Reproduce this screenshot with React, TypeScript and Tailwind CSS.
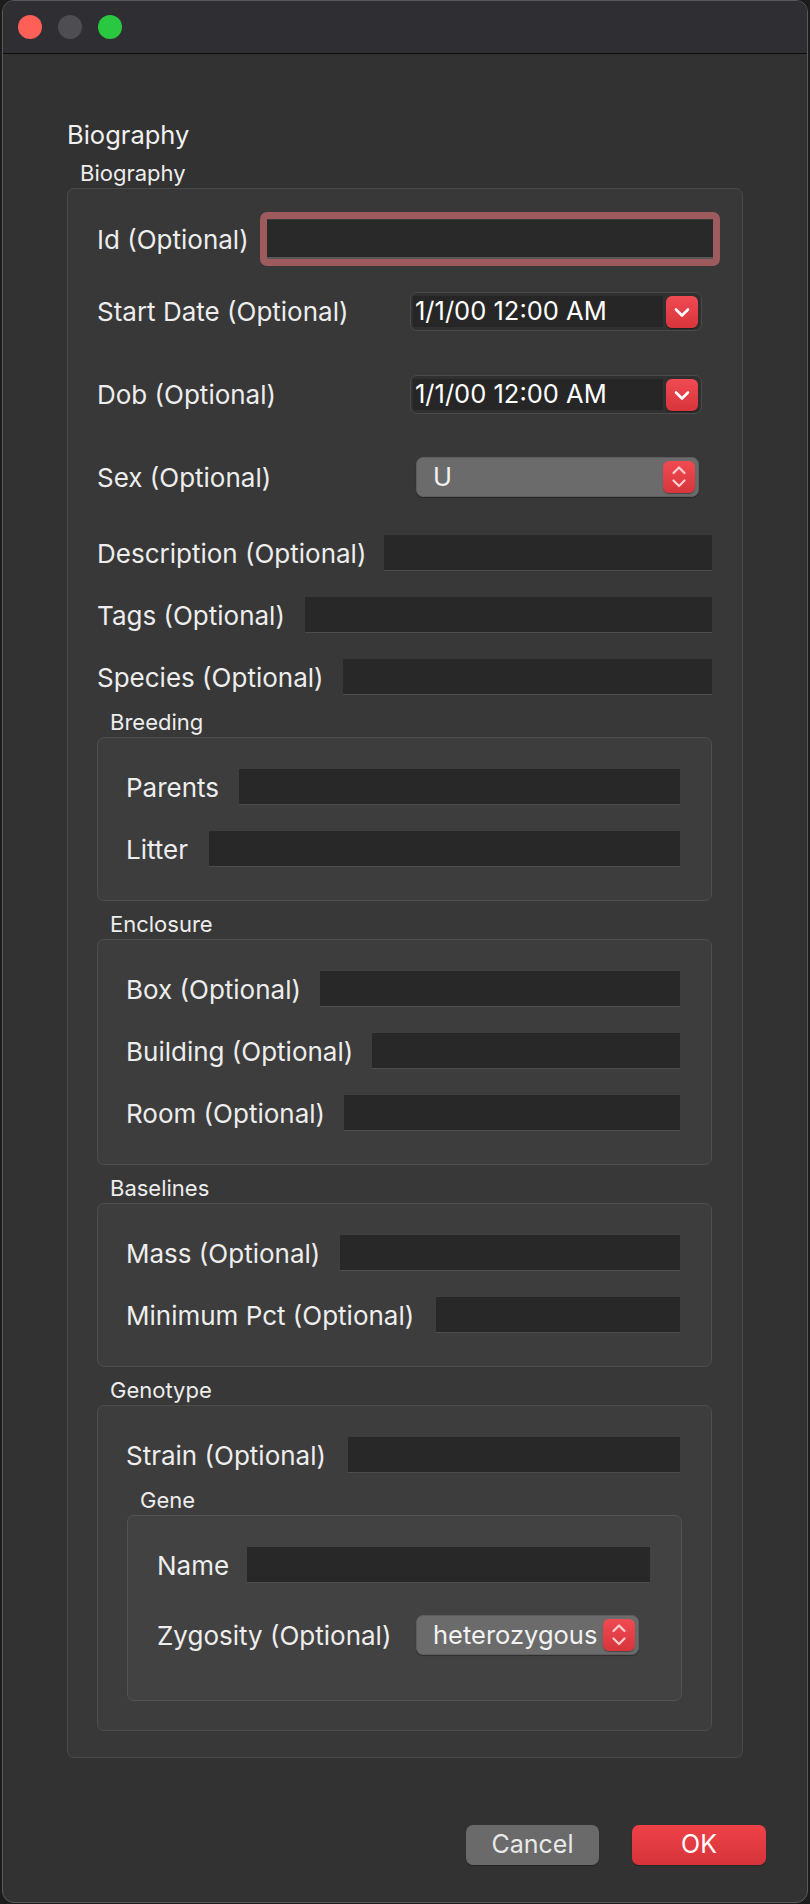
import type { ReactNode } from 'react'

const FONT = "font-['Inter','Liberation_Sans',sans-serif]"

function ChevronDown() {
  return (
    <svg viewBox="0 0 32 32" className="size-full">
      <path d="M10 13.5 L16 19.5 L22 13.5" fill="none" stroke="#ffffff" strokeWidth="2.6" strokeLinecap="round" strokeLinejoin="round" />
    </svg>
  )
}

function ChevronUpDown() {
  return (
    <svg viewBox="0 0 32 32" className="size-full">
      <path d="M10.5 12 L16 6.5 L21.5 12" fill="none" stroke="#f8cfd1" strokeWidth="2.2" strokeLinecap="round" strokeLinejoin="round" />
      <path d="M10.5 19.5 L16 25 L21.5 19.5" fill="none" stroke="#f8cfd1" strokeWidth="2.2" strokeLinecap="round" strokeLinejoin="round" />
    </svg>
  )
}

function Stepper({ children }: { children: ReactNode }) {
  return (
    <div className="h-[32px] w-[32px] shrink-0 rounded-[6px] bg-gradient-to-b from-[#f04a52] to-[#d8343b] shadow-[0_1px_1px_rgba(0,0,0,0.35)]">
      {children}
    </div>
  )
}

function TextRow({ label, labelW }: { label: string; labelW: number }) {
  return (
    <div className="flex h-[36px] items-center">
      <span className="shrink-0 whitespace-nowrap text-[26px] text-[#ededed]" style={{ width: labelW }}>
        {label}
      </span>
      <div className="h-full flex-1 border-b border-[#4d4d4d] bg-[#282828]" />
    </div>
  )
}

function DateRow({ label, className }: { label: string; className?: string }) {
  return (
    <div className={`flex h-[39px] items-center ${className ?? ''}`}>
      <span className="text-[26px] text-[#ededed]">{label}</span>
      <div className="ml-auto mr-[10px] flex h-full w-[292px] items-center gap-[3px] rounded-[7px] border border-[#4b4b4b] bg-[#303030] pl-[2px] pr-[3px]">
        <div className="flex h-[31px] flex-1 items-center whitespace-nowrap bg-[#262626] pl-[2px] text-[25.5px] text-white">
          1/1/00 12:00 AM
        </div>
        <Stepper>
          <ChevronDown />
        </Stepper>
      </div>
    </div>
  )
}

function Popup({ value, width }: { value: string; width: number }) {
  return (
    <div
      className="flex h-[40px] shrink-0 items-center rounded-[7px] border border-[#5d5d5d] bg-[#6b6b6b] pl-[16px] pr-[3px] shadow-[0_1px_1px_rgba(0,0,0,0.3)]"
      style={{ width }}
    >
      <span className="flex-1 whitespace-nowrap text-[25.5px] text-[#f2f2f2]">{value}</span>
      <Stepper>
        <ChevronUpDown />
      </Stepper>
    </div>
  )
}

function Group({
  title,
  children,
  className,
  boxClass,
}: {
  title: string
  children: ReactNode
  className?: string
  boxClass: string
}) {
  return (
    <div className={`flex flex-col ${className ?? ''}`}>
      <div className="h-[24px] pl-[13px] text-[22px] leading-[24px] text-[#ededed]">{title}</div>
      <div className={`mt-[3px] flex flex-col rounded-[7px] border pl-[28px] pr-[31px] pt-[31px] ${boxClass}`}>
        {children}
      </div>
    </div>
  )
}

export default function App() {
  return (
    <div className={`flex h-[1904px] w-[810px] bg-[#1c1c1c] pb-[1px] pl-[2px] pr-[2px] ${FONT}`}>
      <div className="flex flex-1 flex-col overflow-hidden rounded-[12px] border border-[#595959] bg-[#323232]">
        {/* title bar */}
        <div className="flex h-[53px] shrink-0 items-center gap-[16px] border-b border-[#0d0d0d] bg-[#2f2e33] pl-[15px]">
          <span className="size-[24px] rounded-full bg-[#fe5f57]" />
          <span className="size-[24px] rounded-full bg-[#4e4d52]" />
          <span className="size-[24px] rounded-full bg-[#2ac840]" />
        </div>

        <div className="flex flex-col px-[64px] pt-[66px]">
          <div className="h-[30px] text-[25.5px] leading-[30px] text-[#f0f0f0]">Biography</div>

          <Group title="Biography" className="mt-[11px]" boxClass="border-[#4a4a4a] bg-[#383838] !pl-[29px] !pr-[30px] !pt-[23px] pb-[26px]">
            {/* Id */}
            <div className="flex h-[54px] items-center">
              <span className="w-[163px] shrink-0 whitespace-nowrap text-[26px] text-[#ededed]">Id (Optional)</span>
              <div className="-mr-[8px] flex-1 rounded-[7px] bg-[#9e5b5e] p-[7px]">
                <div className="h-[40px] border-t border-b-2 border-t-[#3a3a3a] border-b-[#585858] bg-[#292929]" />
              </div>
            </div>

            <DateRow label="Start Date (Optional)" className="mt-[26px]" />
            <DateRow label="Dob (Optional)" className="mt-[44px]" />

            <div className="mt-[43px] flex h-[40px] items-center">
              <span className="text-[26px] text-[#ededed]">Sex (Optional)</span>
              <div className="ml-auto mr-[13px]">
                <Popup value="U" width={283} />
              </div>
            </div>

            <div className="mt-[38px] flex flex-col gap-[26px]">
              <TextRow label="Description (Optional)" labelW={287} />
              <TextRow label="Tags (Optional)" labelW={208} />
              <TextRow label="Species (Optional)" labelW={246} />
            </div>

            <Group title="Breeding" className="mt-[15px]" boxClass="border-[#4e4e4e] bg-[#3d3d3d] pb-[33px]">
              <div className="flex flex-col gap-[26px]">
                <TextRow label="Parents" labelW={113} />
                <TextRow label="Litter" labelW={83} />
              </div>
            </Group>

            <Group title="Enclosure" className="mt-[11px]" boxClass="border-[#4e4e4e] bg-[#3d3d3d] pb-[33px]">
              <div className="flex flex-col gap-[26px]">
                <TextRow label="Box (Optional)" labelW={194} />
                <TextRow label="Building (Optional)" labelW={246} />
                <TextRow label="Room (Optional)" labelW={218} />
              </div>
            </Group>

            <Group title="Baselines" className="mt-[11px]" boxClass="border-[#4e4e4e] bg-[#3d3d3d] pb-[33px]">
              <div className="flex flex-col gap-[26px]">
                <TextRow label="Mass (Optional)" labelW={214} />
                <TextRow label="Minimum Pct (Optional)" labelW={310} />
              </div>
            </Group>

            <Group title="Genotype" className="mt-[11px]" boxClass="border-[#4e4e4e] bg-[#3d3d3d] pb-[29px]">
              <TextRow label="Strain (Optional)" labelW={222} />
              <Group title="Gene" className="ml-px -mr-[2px] mt-[15px]" boxClass="border-[#535353] bg-[#424242] !pl-[29px] pb-[45px]">
                <TextRow label="Name" labelW={90} />
                <div className="mt-[32px] flex h-[40px] items-center">
                  <span className="w-[259px] shrink-0 whitespace-nowrap text-[26px] text-[#ededed]">Zygosity (Optional)</span>
                  <Popup value="heterozygous" width={223} />
                </div>
              </Group>
            </Group>
          </Group>
        </div>

        <div className="mt-[67px] flex justify-end gap-[33px] pr-[41px]">
          <button
            type="button"
            className="h-[40px] w-[133px] rounded-[7px] bg-[#6a6a6a] text-[25px] text-[#e9e9e9] shadow-[0_1px_1px_rgba(0,0,0,0.3)]"
          >
            Cancel
          </button>
          <button
            type="button"
            className="h-[40px] w-[134px] rounded-[7px] bg-gradient-to-b from-[#ef4148] to-[#d6343a] text-[25px] text-white shadow-[0_1px_1px_rgba(0,0,0,0.3)]"
          >
            OK
          </button>
        </div>
      </div>
    </div>
  )
}
